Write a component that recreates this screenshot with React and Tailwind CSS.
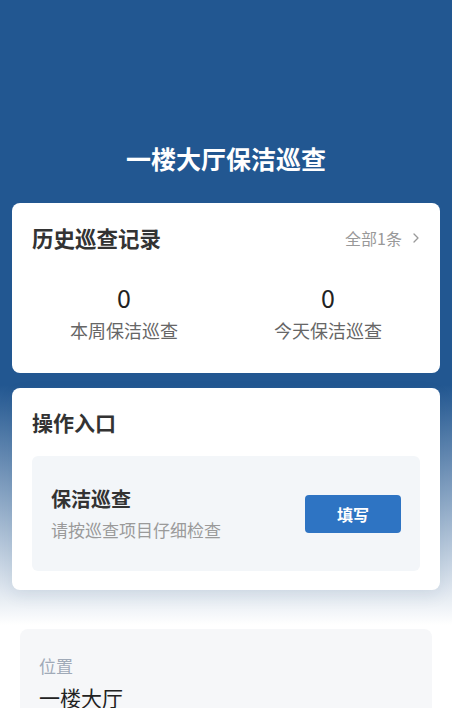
import React from "react";

export default function App() {
  return (
    <div
      className="min-h-[708px] w-full bg-[linear-gradient(to_bottom,#225791_0px,#225791_385px,#ffffff_625px)] pb-10"
      style={{ fontFamily: '"Noto Sans CJK SC", "Noto Sans", sans-serif' }}
    >
      <div className="pt-[140px] text-center text-[25px] leading-[36px] font-bold text-white">
        一楼大厅保洁巡查
      </div>

      <div className="mx-3 mt-[27px] rounded-lg bg-white pt-5 pb-[30px]">
        <div className="flex items-center justify-between px-5">
          <div className="text-[21.5px] leading-[30px] font-bold text-[#333]">历史巡查记录</div>
          <div className="flex items-center gap-[10px] text-[16px] leading-[22px] text-[#999]">
            <span>全部1条</span>
            <svg width="8" height="12" viewBox="0 0 8 12" fill="none">
              <path d="M2 2l4 4-4 4" stroke="#999" strokeWidth="1.3" strokeLinecap="round" strokeLinejoin="round" />
            </svg>
          </div>
        </div>
        <div className="mt-7 grid grid-cols-2 px-[10px] text-center">
          <div className="flex flex-col items-center gap-1">
            <div className="text-[25px] leading-[32px] text-[#222]">0</div>
            <div className="text-[18px] leading-[26px] text-[#666]">本周保洁巡查</div>
          </div>
          <div className="flex flex-col items-center gap-1">
            <div className="text-[25px] leading-[32px] text-[#222]">0</div>
            <div className="text-[18px] leading-[26px] text-[#666]">今天保洁巡查</div>
          </div>
        </div>
      </div>

      <div className="mx-3 mt-[15px] rounded-lg bg-white px-5 pt-[19px] pb-[19px] shadow-[0_6px_16px_rgba(30,60,100,0.08)]">
        <div className="text-[21px] leading-[30px] font-bold text-[#333]">操作入口</div>
        <div className="mt-[19px] flex h-[115px] items-center justify-between rounded-md bg-[#f3f6f9] pr-[19px] pl-[19px]">
          <div className="flex flex-col gap-[5px]">
            <div className="text-[20px] leading-[28px] font-bold text-[#333]">保洁巡查</div>
            <div className="text-[17px] leading-[24px] text-[#9a9a9a]">请按巡查项目仔细检查</div>
          </div>
          <button className="h-[38px] w-[96px] rounded bg-[#2e74c3] text-[16px] font-bold text-white">
            填写
          </button>
        </div>
      </div>

      <div className="mx-5 mt-[39px] rounded-lg bg-[#f6f7f9] px-[19px] pt-[25px] pb-5">
        <div className="text-[17px] leading-[24px] text-[#a0aab8]">位置</div>
        <div className="mt-1 text-[21px] leading-[30px] text-[#222]">一楼大厅</div>
      </div>
    </div>
  );
}
